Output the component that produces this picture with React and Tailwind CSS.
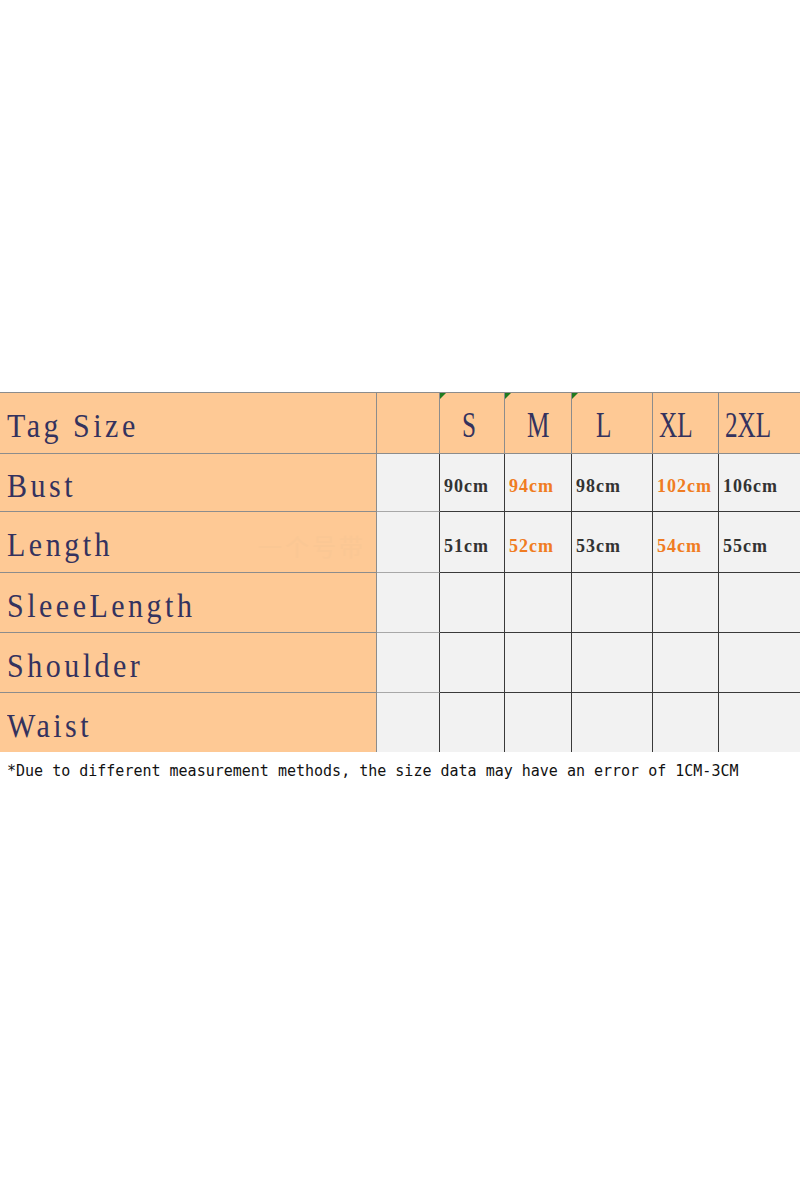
import React from "react";

const sizes = [
  { s: "S", pad: "pl-[22px]" },
  { s: "M", pad: "pl-[22px]" },
  { s: "L", pad: "pl-[24px]" },
  { s: "XL", pad: "pl-[6px]" },
  { s: "2XL", pad: "pl-[6px]" },
];

const rows = [
  { label: "Bust", values: ["90cm", "94cm", "98cm", "102cm", "106cm"] },
  { label: "Length", values: ["51cm", "52cm", "53cm", "54cm", "55cm"], mark: true },
  { label: "SleeeLength", values: ["", "", "", "", ""] },
  { label: "Shoulder", values: ["", "", "", "", ""] },
  { label: "Waist", values: ["", "", "", "", ""] },
];

const serif = { fontFamily: '"Liberation Serif", "Noto Serif", serif' };

const App = () => {
  return (
    <div className="w-[800px] h-[1200px] bg-white pt-[392px]">
      <div className="grid grid-cols-[377px_63px_65px_67px_81px_66px_81px] grid-rows-[61px_58px_61px_60px_60px_59px] border-t border-[#8c8c8c]">
        {/* header row */}
        <div className="bg-[#fec995] border-r border-b border-[#8c8c8c] flex items-center pl-[7px] pt-[6px]">
          <span style={serif} className="text-[30px] tracking-[3.5px] text-[#34325e] scale-y-110 origin-left leading-none">Tag Size</span>
        </div>
        <div className="bg-[#fec995] border-r border-b border-[#8c8c8c]" />
        {sizes.map((c, i) => (
          <div
            key={c.s}
            className={`relative bg-[#fec995] border-b border-[#8c8c8c] flex items-center pt-[6px] ${c.pad} ${i < 4 ? "border-r" : ""}`}
          >
            {i < 3 && (
              <span className="absolute top-0 left-0 w-0 h-0 border-t-[6px] border-r-[6px] border-t-[#1f7a1f] border-r-transparent" />
            )}
            <span style={serif} className="text-[28px] text-[#34325e] scale-y-125 scale-x-90 origin-left leading-none">
              {c.s}
            </span>
          </div>
        ))}

        {rows.map((r, ri) => {
          const last = ri === rows.length - 1;
          return (
            <React.Fragment key={r.label}>
              <div className={`relative bg-[#fec995] border-r border-[#8c8c8c] flex items-center pl-[7px] pt-[6px] ${last ? "" : "border-b"}`}>
                <span style={serif} className="text-[30px] tracking-[3.5px] text-[#34325e] scale-y-110 origin-left leading-none">
                  {r.label}
                </span>
                {r.mark && (
                  <span
                    style={{ fontFamily: '"Noto Sans CJK SC", sans-serif' }}
                    className="absolute right-[10px] top-[16px] text-[24px] text-[#fac794] tracking-[3px]"
                  >
                    一个号带
                  </span>
                )}
              </div>
              <div className={`bg-[#f2f2f2] border-r border-r-[#3a3a3a] ${last ? "" : "border-b border-b-[#a8a8a8]"}`} />
              {r.values.map((v, vi) => (
                <div
                  key={vi}
                  className={`bg-[#f2f2f2] border-[#3a3a3a] flex items-center pl-[4px] pt-[5px] ${vi < 4 ? "border-r" : ""} ${last ? "" : "border-b"}`}
                >
                  <span
                    style={serif}
                    className={`text-[18px] tracking-[1px] font-bold scale-y-110 leading-none ${vi % 2 === 1 ? "text-[#f07c22]" : "text-[#333333]"}`}
                  >
                    {v}
                  </span>
                </div>
              ))}
            </React.Fragment>
          );
        })}
      </div>
      <p
        style={{ fontFamily: '"DejaVu Sans Mono", monospace' }}
        className="mt-[12px] pl-[7px] text-[15px] text-[#111] leading-none"
      >
        *Due to different measurement methods, the size data may have an error of 1CM-3CM
      </p>
    </div>
  );
};

export default App;
